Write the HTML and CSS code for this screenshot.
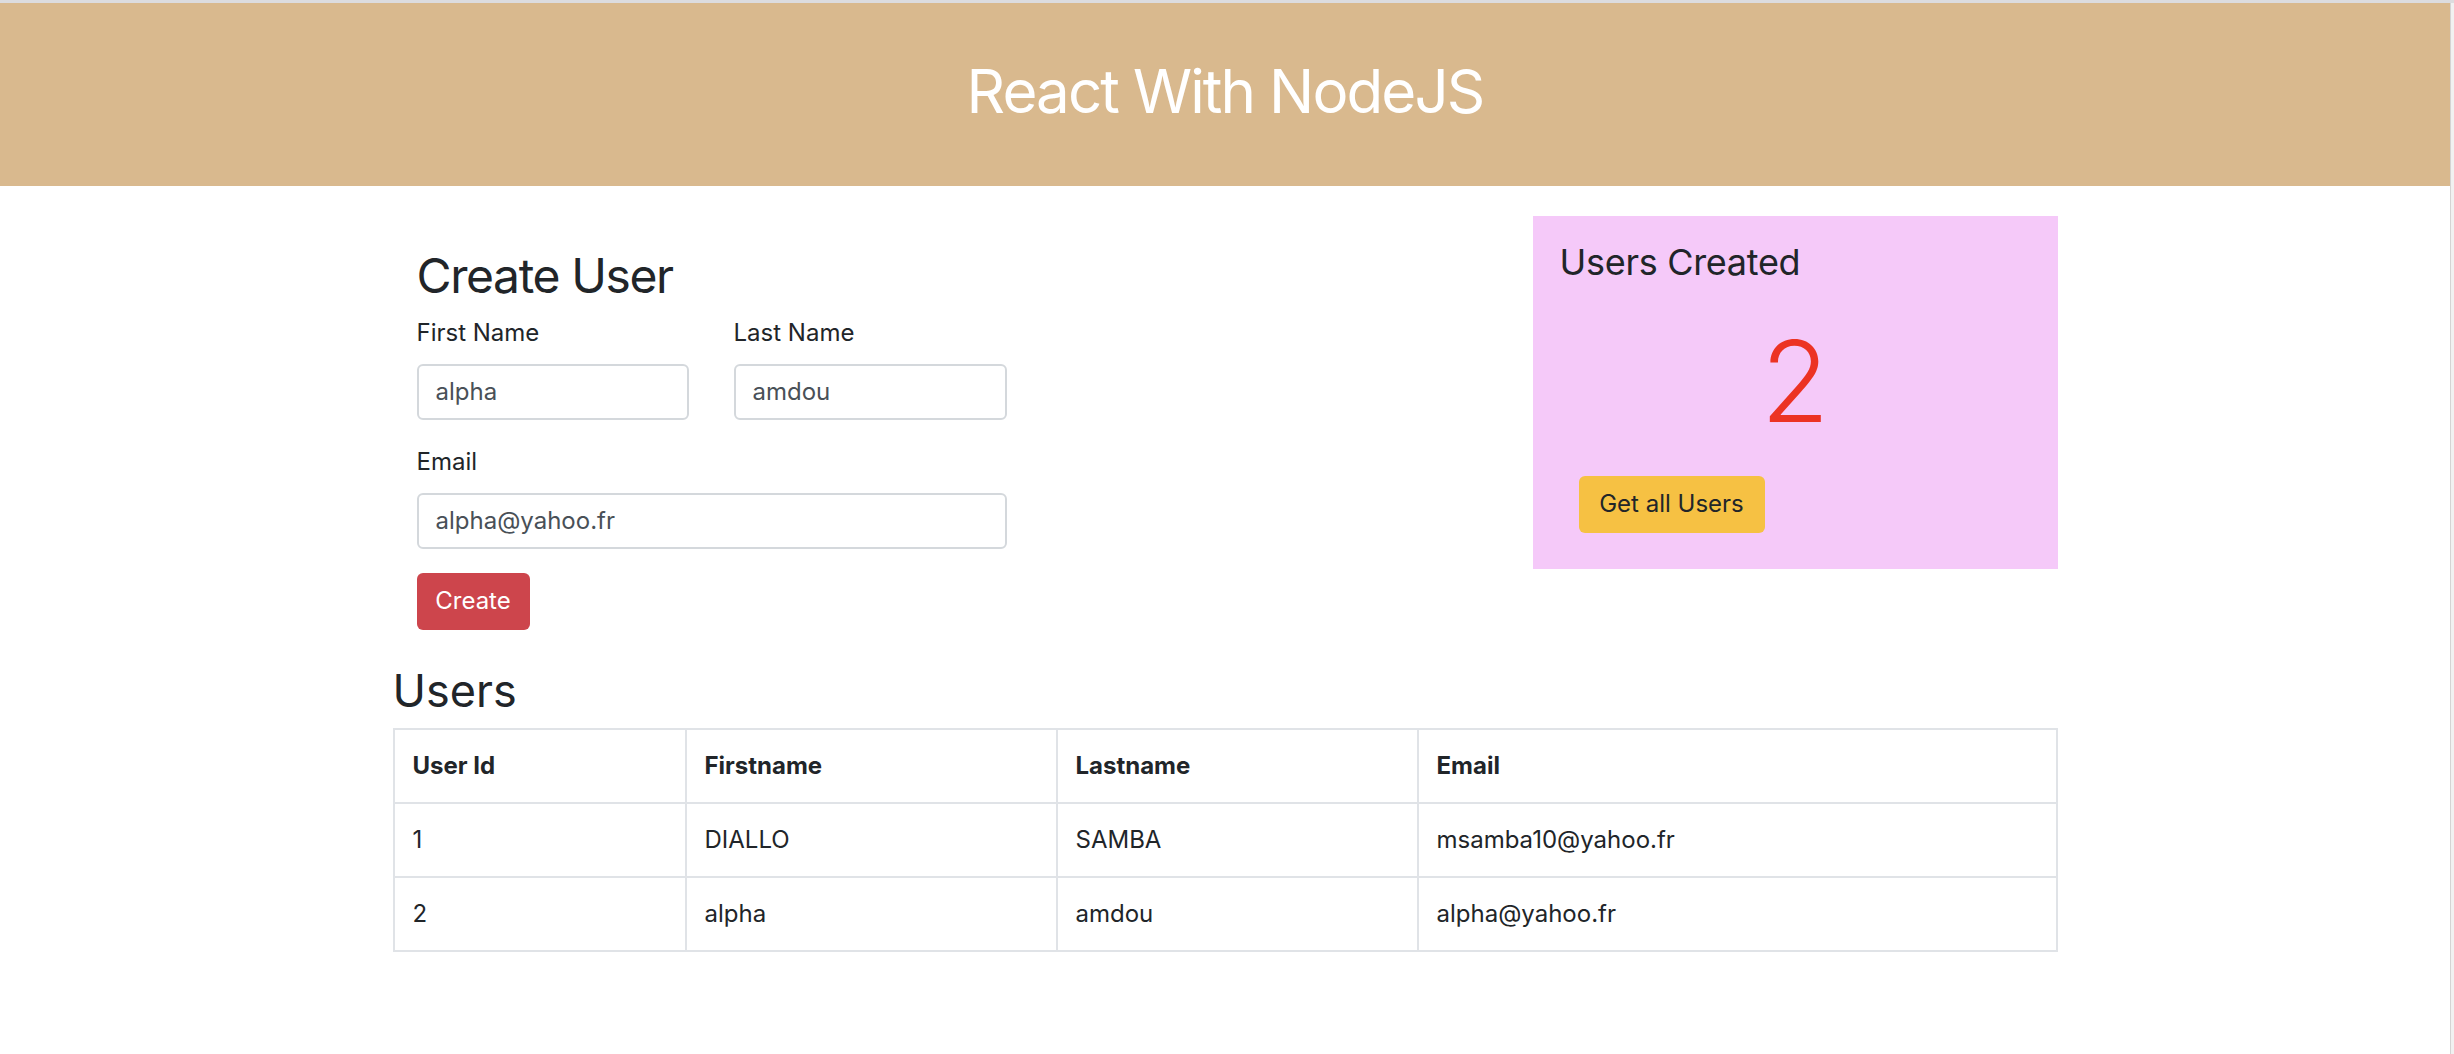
FILE: index.html
```html
<!DOCTYPE html>
<html lang="en">
<head>
<meta charset="utf-8">
<title>React With NodeJS</title>
<link rel="stylesheet" href="styles.css">
</head>
<body>
<div class="window">
  <div class="page">
    <header class="topbar">
      <h1 class="topbar-title">React With NodeJS</h1>
    </header>
    <main class="container">
      <div class="top-row">
        <section class="create">
          <h2 class="create-title">Create User</h2>
          <form class="create-form">
            <div class="form-row">
              <div class="field">
                <label class="field-label" for="fn">First Name</label>
                <input class="field-input" id="fn" type="text" value="alpha">
              </div>
              <div class="field">
                <label class="field-label" for="ln">Last Name</label>
                <input class="field-input" id="ln" type="text" value="amdou">
              </div>
            </div>
            <div class="field field-wide">
              <label class="field-label" for="em">Email</label>
              <input class="field-input" id="em" type="text" value="alpha@yahoo.fr">
            </div>
            <button type="button" class="btn btn-danger">Create</button>
          </form>
        </section>
        <aside class="stats">
          <h4 class="stats-title">Users Created</h4>
          <div class="stats-count">2</div>
          <button type="button" class="btn btn-warning">Get all Users</button>
        </aside>
      </div>
      <h3 class="users-title">Users</h3>
      <table class="users-table">
        <thead>
          <tr>
            <th class="col-id">User Id</th>
            <th class="col-first">Firstname</th>
            <th class="col-last">Lastname</th>
            <th class="col-email">Email</th>
          </tr>
        </thead>
        <tbody>
          <tr>
            <td>1</td>
            <td>DIALLO</td>
            <td>SAMBA</td>
            <td>msamba10@yahoo.fr</td>
          </tr>
          <tr>
            <td>2</td>
            <td>alpha</td>
            <td>amdou</td>
            <td>alpha@yahoo.fr</td>
          </tr>
        </tbody>
      </table>
    </main>
  </div>
  <div class="scrollbar"></div>
</div>
</body>
</html>
```

FILE: styles.css
```css
* {
  box-sizing: border-box;
}

html, body {
  margin: 0;
  padding: 0;
  background: #ffffff;
}

body {
  font-family: Inter, "Noto Sans", "Liberation Sans", sans-serif;
  color: #212529;
  font-size: 24px;
  line-height: 1.5;
}

.window {
  display: flex;
  min-height: 100vh;
  border-top: 3px solid #dcdcdf;
}

.page {
  flex: 1;
  min-width: 0;
}

.scrollbar {
  width: 4px;
  background: #f1f1f1;
  border-left: 1px solid #d4d4d4;
}

/* header */
.topbar {
  background: #d9b98e;
  text-align: center;
  padding: 52px 0 59px;
}

.topbar-title {
  margin: 0;
  font-size: 60px;
  font-weight: 400;
  line-height: 72px;
  letter-spacing: -1.9px;
  color: #ffffff;
}

/* layout */
.container {
  width: 1665px;
  margin: 0 auto;
}

.top-row {
  display: flex;
  justify-content: space-between;
  align-items: flex-start;
  margin-top: 30px;
}

.create {
  margin-left: 24px;
  padding-top: 31px;
}

.create-title {
  margin: 0 0 10px;
  font-size: 48px;
  font-weight: 400;
  line-height: 1.2;
  letter-spacing: -1.4px;
}

.create-form {
  width: 590px;
}

.form-row {
  display: grid;
  grid-template-columns: 272px 273px;
  column-gap: 45px;
}

.field {
  margin-bottom: 24px;
}

.field-label {
  display: block;
  font-size: 24px;
  line-height: 36px;
  margin-bottom: 13px;
}

.field-input {
  display: block;
  width: 100%;
  height: 56px;
  padding: 0 17px;
  font-family: inherit;
  font-size: 24px;
  color: #495057;
  background: #ffffff;
  border: 2px solid #d4d8dc;
  border-radius: 6px;
  outline: none;
}

.btn {
  display: inline-block;
  height: 57px;
  font-family: inherit;
  font-size: 24px;
  line-height: 36px;
  border: none;
  border-radius: 6px;
  text-align: center;
  padding: 0;
  cursor: pointer;
}

.btn-danger {
  width: 113px;
  background: #cd454c;
  color: #ffffff;
}

.btn-warning {
  width: 186px;
  background: #f6c143;
  color: #212529;
  margin-left: 19px;
}

/* stats box */
.stats {
  width: 525px;
  height: 353px;
  background: #f5c9f9;
  padding: 25px 27px 0;
}

.stats-title {
  margin: 0;
  font-size: 36px;
  font-weight: 400;
  line-height: 1.2;
  letter-spacing: -0.3px;
}

.stats-count {
  margin-top: 30px;
  margin-left: -27px;
  margin-right: -27px;
  text-align: center;
  font-size: 112px;
  font-weight: 300;
  line-height: 1.2;
  color: #ec3323;
}

.stats .btn-warning {
  margin-top: 27px;
}

/* users table */
.users-title {
  margin: 34px 0 10px;
  font-size: 45px;
  font-weight: 400;
  line-height: 1.2;
}

.users-table {
  width: 100%;
  border-collapse: collapse;
  font-size: 24px;
  line-height: 36px;
}

.users-table th,
.users-table td {
  border: 2px solid #e0e3e7;
  padding: 18px 18px;
  text-align: left;
  vertical-align: middle;
}

.users-table th {
  font-weight: 700;
}

.col-id { width: 292px; }
.col-first { width: 371px; }
.col-last { width: 361px; }
```
